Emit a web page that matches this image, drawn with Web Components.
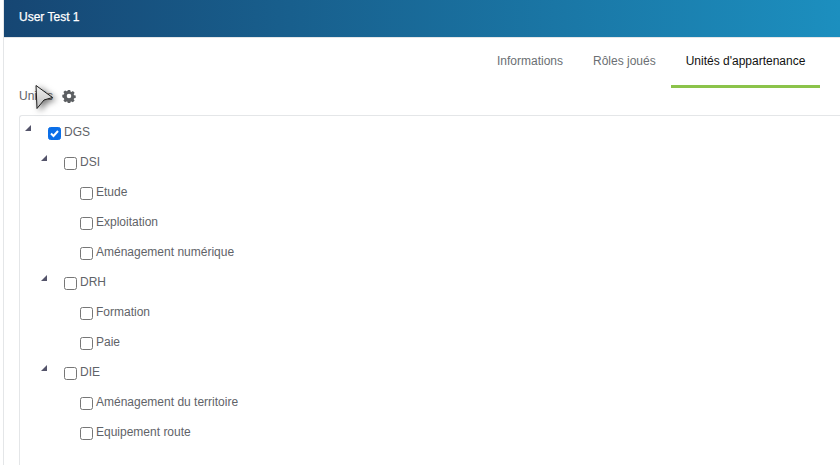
<!DOCTYPE html>
<html lang="fr"><head><meta charset="utf-8"><style>
html,body{margin:0;padding:0;height:100%;overflow:hidden;background:#fff}
body{font:12px "Liberation Sans",Arial,sans-serif;color:#555}
</style></head><body>
<app-card heading="User Test 1">
  <tab-bar slot="tabs">
    <tab-item>Informations</tab-item>
    <tab-item>Rôles joués</tab-item>
    <tab-item active>Unités d'appartenance</tab-item>
  </tab-bar>
  <unit-section label="Unités">
    <tree-node label="DGS" checked arrow>
      <tree-node label="DSI" arrow>
        <tree-node label="Etude"></tree-node>
        <tree-node label="Exploitation"></tree-node>
        <tree-node label="Aménagement numérique"></tree-node>
      </tree-node>
      <tree-node label="DRH" arrow>
        <tree-node label="Formation"></tree-node>
        <tree-node label="Paie"></tree-node>
      </tree-node>
      <tree-node label="DIE" arrow>
        <tree-node label="Aménagement du territoire"></tree-node>
        <tree-node label="Equipement route"></tree-node>
      </tree-node>
    </tree-node>
  </unit-section>
</app-card>
<script>
function def(name, html){
  customElements.define(name, class extends HTMLElement{
    constructor(){super();this.attachShadow({mode:'open'});}
    connectedCallback(){
      const a={};for(const at of this.attributes)a[at.name]=at.value===''?true:at.value;
      a.depth=0;let p=this.parentElement;while(p){if(p.localName==='tree-node')a.depth++;p=p.parentElement;}
      this.shadowRoot.innerHTML=html(a);
    }
  });
}
def('app-card',a=>`<style>
:host{display:flex;flex-direction:column;height:465px;box-sizing:border-box;margin-left:3px;border-left:1px solid #e4e6e8;overflow:hidden}
header{flex:none;height:37px;box-sizing:border-box;padding:10px 15px 0;background:linear-gradient(90deg,#164673,#1c8fbf);color:#fff;font-size:12px;font-weight:400;line-height:15px;-webkit-text-stroke:.25px #fff}
.rule{flex:none;height:1px;background:#e4e6e8}
</style><header>${a.heading}</header><div class="rule"></div><slot name="tabs"></slot><slot></slot>`);
def('tab-bar',a=>`<style>
:host{display:flex;flex:none;justify-content:flex-end;padding-right:20px;height:50px}
</style><slot></slot>`);
def('tab-item',a=>`<style>
:host{display:block;box-sizing:border-box;height:50px;padding:16px ${a.active?14.6:15}px 0 15px;line-height:14px;font-size:12px;color:${a.active?'#111':'#6b6f73'};border-bottom:3px solid ${a.active?'#8bc34a':'transparent'}}
</style><slot></slot>`);
def('unit-section',a=>`<style>
:host{display:block;flex:none;padding-left:15px;position:relative}
.head{display:flex;align-items:flex-start;height:27px;box-sizing:border-box;padding-top:1px;gap:9px;font-size:12px;line-height:14px;color:#5f6368}
.head svg{display:block}
.tree{border:1px solid #e4e6e8;border-right:0;border-radius:3px 0 0 0;height:400px;padding-left:28px;box-sizing:border-box}
.cursor{position:absolute;left:30px;top:-4px;filter:drop-shadow(3px 2px 3px rgba(0,0,0,.55))}
</style><div class="head"><span>${a.label}</span>
<svg width="14" height="14" viewBox="0 0 14 14"><path fill="#5c5f62" fill-rule="evenodd" d="M5.800 1h2.400l.3 1.600 1 .4 1.400-.9 1.700 1.700-.9 1.400.4 1 1.600.3v2.400l-1.600.3-.4 1 .9 1.400-1.700 1.700-1.400-.9-1 .4-.3 1.600H5.800l-.3-1.600-1-.4-1.400.9-1.700-1.700.9-1.400-.4-1L.3 8.200V5.800l1.600-.3.4-1-.9-1.400 1.700-1.700 1.400.9 1-.4zM7 4.700a2.300 2.300 0 1 0 0 4.600 2.300 2.300 0 0 0 0-4.600z"/></svg></div>
<div class="tree"><slot></slot></div>
<svg class="cursor" width="22" height="28" viewBox="0 0 22 28"><defs><linearGradient id="g" x1="0" y1="0" x2="0" y2="1"><stop offset="0" stop-color="#f2f2f2"/><stop offset="1" stop-color="#bdbdbd"/></linearGradient></defs><path d="M2 1.500 18.500 13.500 10 16 3 24.500z" fill="url(#g)" stroke="#1a1a1a" stroke-width="1"/></svg>`);
def('tree-node',a=>`<style>
:host{display:block;padding-left:${a.depth?16:0}px}
.row{display:flex;align-items:flex-start;height:30px;padding-top:9px;box-sizing:border-box;position:relative;line-height:14px;color:#5f6368;font-size:12px}
.arrow{position:absolute;left:-23px;top:9px}
.box{box-sizing:border-box;width:13px;height:13px;margin:2px 3px 0 0;border-radius:2.500px;border:1px solid #767676;background:#fff;flex:none;display:block}
.box.on{background:#0b6fe8;border-color:#0b6fe8}
.box svg{display:block}
</style><div class="row">${a.arrow?'<svg class="arrow" width="6" height="6" viewBox="0 0 6 6"><path d="M6 0v6H0z" fill="#54546a"/></svg>':''}<span class="box ${a.checked?'on':''}">${a.checked?'<svg width="11" height="11" viewBox="0 0 11 11"><path d="M2 5.500 4.500 8 9 3" fill="none" stroke="#fff" stroke-width="2"/></svg>':''}</span><span>${a.label}</span></div><slot></slot>`);
</script>
</body></html>
